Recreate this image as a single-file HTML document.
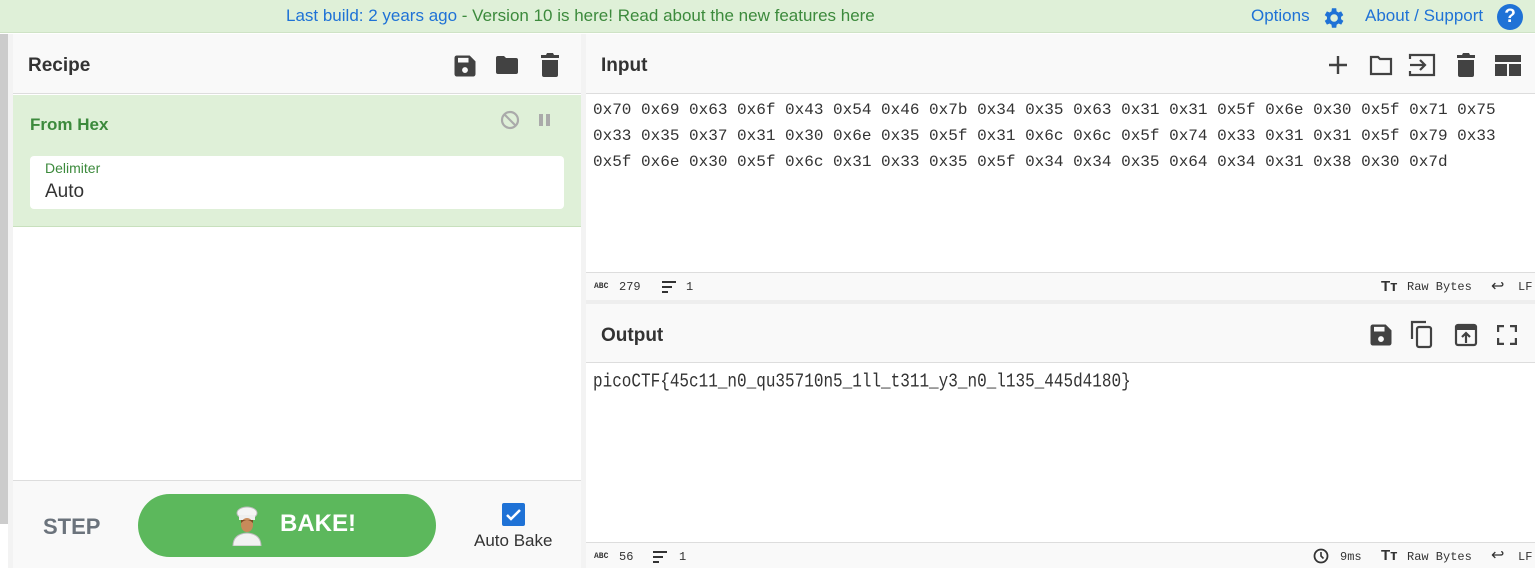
<!DOCTYPE html>
<html><head><meta charset="utf-8"><style>
*{box-sizing:border-box;margin:0;padding:0}
body{width:1535px;height:568px;overflow:hidden;font-family:"Liberation Sans",sans-serif;background:#fff;position:relative;color:#424242}
.abs{position:absolute}
.top{left:0;top:0;width:1535px;height:33px;background:#dff0d8;border-bottom:1px solid #cfe3c6}
.top .msg{left:286px;top:6px;font-size:17px;color:#3c8a3c;white-space:nowrap}
.blue{color:#1f72d6}
.hdr{font-weight:bold;font-size:19px;color:#333}
.mono{font-family:"Liberation Mono",monospace}
.stat{font-family:"Liberation Mono",monospace;font-size:12px;color:#333}
</style></head><body>
<div class="abs top">
 <div class="abs msg"><span class="blue">Last build: 2 years ago</span> - Version 10 is here! Read about the new features here</div>
 <div class="abs" style="left:1251px;top:6px;font-size:17px;color:#1f72d6">Options</div>
 <svg class="abs" style="left:1320px;top:5px" width="26" height="26" viewBox="0 0 24 24"><path fill="#1f72d6" d="M19.4 13a7.5 7.5 0 0 0 0-2l2.1-1.6-2-3.5-2.5 1a7 7 0 0 0-1.7-1L15 3h-4l-.4 2.9a7 7 0 0 0-1.7 1l-2.5-1-2 3.5L6.5 11a7.5 7.5 0 0 0 0 2l-2.1 1.6 2 3.5 2.5-1a7 7 0 0 0 1.7 1L11 21h4l.4-2.9a7 7 0 0 0 1.7-1l2.5 1 2-3.5zM13 15.5a3.5 3.5 0 1 1 0-7 3.5 3.5 0 0 1 0 7z"/></svg>
 <div class="abs" style="left:1365px;top:6px;font-size:17px;color:#1f72d6">About / Support</div>
 <div class="abs" style="left:1497px;top:4px;width:26px;height:26px;border-radius:50%;background:#1f72d6;color:#fff;font-weight:bold;font-size:19px;text-align:center;line-height:26px">?</div>
</div>
<div class="abs" style="left:0;top:34px;width:8px;height:490px;background:#ccc"></div>
<div class="abs" style="left:8px;top:34px;width:5px;height:534px;background:#f3f3f3"></div>
<!-- recipe -->
<div class="abs" style="left:13px;top:34px;width:568px;height:60px;background:#f9f9f9;border-bottom:1px solid #ddd">
 <div class="abs hdr" style="left:15px;top:21px">Recipe</div>
 <svg class="abs" style="left:438px;top:18px" width="28" height="28" viewBox="0 0 24 24"><path fill="#424242" d="M3 5a2 2 0 0 1 2-2h11l5 5v11a2 2 0 0 1-2 2H5a2 2 0 0 1-2-2zM6 5v4h9V5zm6 8a2.5 2.5 0 1 0 0 5 2.5 2.5 0 0 0 0-5z"/></svg>
 <svg class="abs" style="left:480px;top:19px" width="28" height="24" viewBox="0 0 26 24"><path fill="#424242" d="M2 5a2 2 0 0 1 2-2h6l2 2h10a2 2 0 0 1 2 2v12a2 2 0 0 1-2 2H4a2 2 0 0 1-2-2z"/></svg>
 <svg class="abs" style="left:526px;top:18px" width="22" height="26" viewBox="0 0 22 26"><path fill="#424242" d="M2 3h5l1-2h6l1 2h5v3H2zM3 8h16v15a2 2 0 0 1-2 2H5a2 2 0 0 1-2-2z"/></svg>
</div>
<div class="abs" style="left:13px;top:95px;width:568px;height:132px;background:#dff0d8;border-bottom:1px solid #c8e0bd">
 <div class="abs" style="left:17px;top:20px;font-weight:bold;font-size:17px;color:#3c8a3c">From Hex</div>
 <svg class="abs" style="left:487px;top:15px" width="20" height="20" viewBox="0 0 20 20"><circle cx="10" cy="10" r="8" fill="none" stroke="#aaa" stroke-width="2.2"/><path d="M4.5 4.5l11 11" stroke="#aaa" stroke-width="2.2"/></svg>
 <div class="abs" style="left:526px;top:19px;width:4px;height:12px;background:#aaa"></div>
 <div class="abs" style="left:533px;top:19px;width:4px;height:12px;background:#aaa"></div>
 <div class="abs" style="left:17px;top:61px;width:534px;height:53px;background:#fff;border-radius:4px">
  <div class="abs" style="left:15px;top:4px;font-size:14px;color:#3c8a3c">Delimiter</div>
  <div class="abs" style="left:15px;top:25px;font-size:19px;color:#333">Auto</div>
 </div>
</div>
<div class="abs" style="left:13px;top:480px;width:568px;height:88px;background:#f9f9f9;border-top:1px solid #ddd">
 <div class="abs" style="left:30px;top:33px;font-weight:bold;font-size:22px;color:#6b737c">STEP</div>
 <div class="abs" style="left:125px;top:13px;width:298px;height:63px;border-radius:32px;background:#5cb85c">
  <svg class="abs" style="left:92px;top:12px" width="34" height="40" viewBox="0 0 34 40"><ellipse cx="17" cy="7" rx="10" ry="6" fill="#f4f4f4" stroke="#bbb"/><rect x="9" y="9" width="16" height="5" fill="#eee"/><ellipse cx="17" cy="19" rx="6" ry="7" fill="#c88a5a"/><path d="M11 17q6 -6 12 0v-3h-12z" fill="#7a4a22"/><path d="M3 40q0-12 14-13q14 1 14 13z" fill="#f2f2f2" stroke="#bbb"/></svg>
  <div class="abs" style="left:142px;top:16px;font-weight:bold;font-size:24px;color:#fff">BAKE!</div>
 </div>
 <div class="abs" style="left:489px;top:22px;width:23px;height:23px;background:#1f72d6;border-radius:2px"><svg width="23" height="23"><path d="M5 12l4 4 9-9" stroke="#fff" stroke-width="2.5" fill="none"/></svg></div>
 <div class="abs" style="left:461px;top:50px;font-size:17px;color:#333">Auto Bake</div>
</div>
<div class="abs" style="left:581px;top:34px;width:5px;height:534px;background:#f3f3f3"></div>
<!-- input -->
<div class="abs" style="left:586px;top:34px;width:949px;height:60px;background:#f9f9f9;border-bottom:1px solid #ddd">
 <div class="abs hdr" style="left:15px;top:21px">Input</div>
 <svg class="abs" style="left:741px;top:20px" width="22" height="22"><path d="M11 2v18M2 11h18" stroke="#424242" stroke-width="2.4"/></svg>
 <svg class="abs" style="left:782px;top:19px" width="26" height="24" viewBox="0 0 26 24"><path d="M3 4h7l2 2h11v15H3z" fill="none" stroke="#424242" stroke-width="2.2"/></svg>
 <svg class="abs" style="left:822px;top:18px" width="28" height="26" viewBox="0 0 28 26"><path d="M2 7V3h24v20H2v-4" fill="none" stroke="#424242" stroke-width="2.2"/><path d="M2 13h14M12 8l5 5-5 5" fill="none" stroke="#424242" stroke-width="2.2"/></svg>
 <svg class="abs" style="left:869px;top:18px" width="22" height="26" viewBox="0 0 22 26"><path fill="#424242" d="M2 3h5l1-2h6l1 2h5v3H2zM3 8h16v15a2 2 0 0 1-2 2H5a2 2 0 0 1-2-2z"/></svg>
 <svg class="abs" style="left:909px;top:21px" width="26" height="21"><path fill="#424242" d="M0 0h26v7H0zM0 9h12v12H0zM14 9h12v12H14z"/></svg>
</div>
<div class="abs mono" style="left:593px;top:97px;font-size:16px;line-height:26px;color:#333;white-space:pre">0x70 0x69 0x63 0x6f 0x43 0x54 0x46 0x7b 0x34 0x35 0x63 0x31 0x31 0x5f 0x6e 0x30 0x5f 0x71 0x75
0x33 0x35 0x37 0x31 0x30 0x6e 0x35 0x5f 0x31 0x6c 0x6c 0x5f 0x74 0x33 0x31 0x31 0x5f 0x79 0x33
0x5f 0x6e 0x30 0x5f 0x6c 0x31 0x33 0x35 0x5f 0x34 0x34 0x35 0x64 0x34 0x31 0x38 0x30 0x7d</div>
<div class="abs" style="left:586px;top:272px;width:949px;height:28px;background:#f9f9f9;border-top:1px solid #ddd">
 <div class="abs stat" style="left:8px;top:9px;font-size:8px;font-weight:bold">ABC</div>
 <div class="abs stat" style="left:33px;top:7px">279</div>
 <svg class="abs" style="left:76px;top:8px" width="14" height="12"><path d="M0 1h14M0 6h10M0 11h6" stroke="#333" stroke-width="2"/></svg>
 <div class="abs stat" style="left:100px;top:7px">1</div>
 <div class="abs" style="left:795px;top:5px;font-weight:bold;font-size:15px;color:#333">Tт</div>
 <div class="abs stat" style="left:821px;top:7px">Raw Bytes</div>
 <div class="abs" style="left:905px;top:3px;font-size:16px;color:#333">↩</div>
 <div class="abs stat" style="left:932px;top:7px">LF</div>
</div>
<div class="abs" style="left:586px;top:300px;width:949px;height:4px;background:#eee"></div>
<!-- output -->
<div class="abs" style="left:586px;top:304px;width:949px;height:59px;background:#f9f9f9;border-bottom:1px solid #ddd">
 <div class="abs hdr" style="left:15px;top:21px">Output</div>
 <svg class="abs" style="left:781px;top:17px" width="28" height="28" viewBox="0 0 24 24"><path fill="#424242" d="M3 5a2 2 0 0 1 2-2h11l5 5v11a2 2 0 0 1-2 2H5a2 2 0 0 1-2-2zM6 5v4h9V5zm6 8a2.5 2.5 0 1 0 0 5 2.5 2.5 0 0 0 0-5z"/></svg>
 <svg class="abs" style="left:823px;top:15px" width="26" height="30"><path d="M3 20V3h14" fill="none" stroke="#424242" stroke-width="2.2"/><rect x="8" y="8" width="14" height="20" rx="2" fill="none" stroke="#424242" stroke-width="2.2"/></svg>
 <svg class="abs" style="left:868px;top:19px" width="24" height="24"><rect x="2" y="2" width="20" height="20" rx="2" fill="none" stroke="#424242" stroke-width="2.2"/><rect x="2" y="2" width="20" height="5" fill="#424242"/><path d="M12 20v-9M8 14l4-4 4 4" stroke="#424242" stroke-width="2.2" fill="none"/></svg>
 <svg class="abs" style="left:911px;top:21px" width="20" height="20"><path d="M1 7V1h6M13 1h6v6M19 13v6h-6M7 19H1v-6" stroke="#424242" stroke-width="2.4" fill="none"/></svg>
</div>
<div class="abs mono" style="left:593px;top:371px;font-size:16px;color:#333;white-space:pre;transform:scaleY(1.2);transform-origin:0 0">picoCTF{45c11_n0_qu35710n5_1ll_t311_y3_n0_l135_445d4180}</div>
<div class="abs" style="left:586px;top:542px;width:949px;height:26px;background:#f9f9f9;border-top:1px solid #ddd">
 <div class="abs stat" style="left:8px;top:9px;font-size:8px;font-weight:bold">ABC</div>
 <div class="abs stat" style="left:33px;top:7px">56</div>
 <svg class="abs" style="left:67px;top:8px" width="14" height="12"><path d="M0 1h14M0 6h10M0 11h6" stroke="#333" stroke-width="2"/></svg>
 <div class="abs stat" style="left:93px;top:7px">1</div>
 <svg class="abs" style="left:727px;top:5px" width="16" height="16"><circle cx="8" cy="8" r="6.5" fill="none" stroke="#333" stroke-width="1.8"/><path d="M8 4v4l2.5 2.5" stroke="#333" stroke-width="1.6" fill="none"/></svg>
 <div class="abs stat" style="left:754px;top:7px">9ms</div>
 <div class="abs" style="left:795px;top:4px;font-weight:bold;font-size:15px;color:#333">Tт</div>
 <div class="abs stat" style="left:821px;top:7px">Raw Bytes</div>
 <div class="abs" style="left:905px;top:2px;font-size:16px;color:#333">↩</div>
 <div class="abs stat" style="left:932px;top:7px">LF</div>
</div>
</body></html>
